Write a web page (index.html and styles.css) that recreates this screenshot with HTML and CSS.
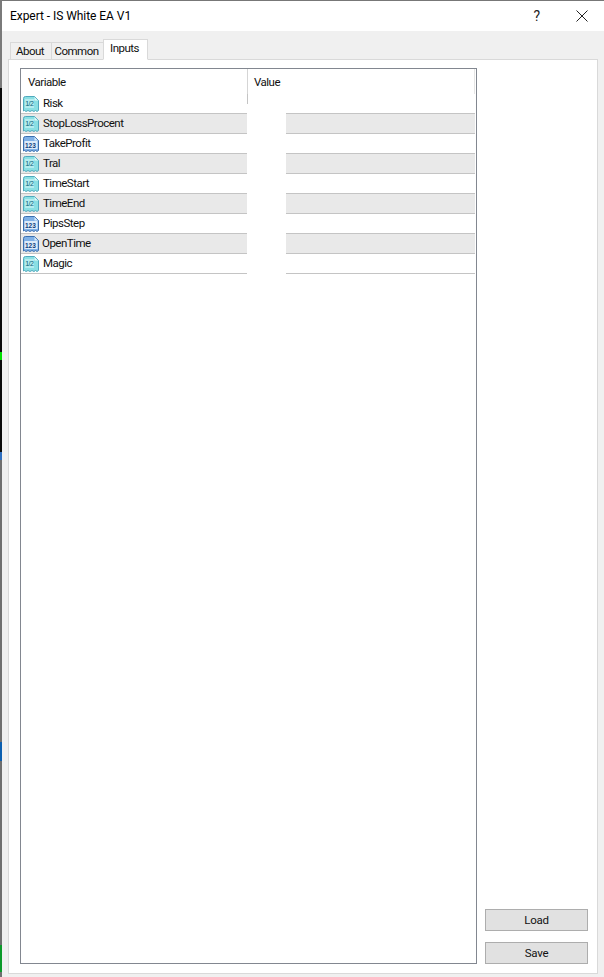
FILE: index.html
```html
<!DOCTYPE html>
<html lang="en">
<head>
<meta charset="utf-8">
<title>Expert - IS White EA V1</title>
<link rel="stylesheet" href="styles.css">
</head>
<body>
<svg class="defs" width="0" height="0" aria-hidden="true">
  <symbol id="tag-frac" viewBox="0 0 16 16">
    <path d="M.5 2.5q0-2 2-2h9l4 4v10l-1.500 1-1.500-1-1.500 1-2-1-2 1-2-1-2 1-1.500-1-1 .5z" fill="#8adfe3" stroke="#4fa9bd"/>
    <path d="M11.500 1v3.500h3.500z" fill="#dff7f8"/>
    <rect x="2" y="3" width="9" height="9" fill="#b4ecef"/>
  </symbol>
  <symbol id="tag-num" viewBox="0 0 16 16">
    <path d="M.5 2.500q0-2 2-2h9l4 4v10l-1.500 1-1.500-1-1.500 1-2-1-2 1-2-1-2 1-1.500-1-1 .5z" fill="#7fb0e6" stroke="#3a6fb0"/>
    <path d="M11.500 1v3.500h3.500z" fill="#d8e8f8"/>
    <rect x="1.500" y="5" width="13" height="8" fill="#dcebf9"/>
  </symbol>
</svg>
<div class="screen">
  <div class="strip"></div>
  <div class="window">
    <header class="titlebar">
      <span class="title">Expert - IS White EA V1</span>
      <div class="controls">
        <span class="help">?</span>
        <svg class="close" width="12" height="12" viewBox="0 0 12 12"><path d="M.5.5l11 11M11.500.5l-11 11" stroke="#222" stroke-width="1" fill="none"/></svg>
      </div>
    </header>
    <main class="body">
      <nav class="tabs">
        <span class="tab tab-about">About</span>
        <span class="tab tab-common">Common</span>
        <span class="tab tab-active">Inputs</span>
      </nav>
      <section class="panel">
        <div class="list">
          <div class="head">
            <span class="head-var">Variable</span>
            <span class="head-val">Value</span>
          </div>
          <div class="row"><div class="var"><svg class="icon" viewBox="0 0 16 16"><use href="#tag-frac"/><text x="2.200" y="10" class="icon-text frac">1/2</text></svg><span>Risk</span></div><div class="mask"></div><div class="val"></div></div>
          <div class="row alt"><div class="var"><svg class="icon" viewBox="0 0 16 16"><use href="#tag-frac"/><text x="2.200" y="10" class="icon-text frac">1/2</text></svg><span>StopLossProcent</span></div><div class="mask"></div><div class="val"></div></div>
          <div class="row"><div class="var"><svg class="icon" viewBox="0 0 16 16"><use href="#tag-num"/><text x="2" y="11.700" class="icon-text num">123</text></svg><span>TakeProfit</span></div><div class="mask"></div><div class="val"></div></div>
          <div class="row alt"><div class="var"><svg class="icon" viewBox="0 0 16 16"><use href="#tag-frac"/><text x="2.200" y="10" class="icon-text frac">1/2</text></svg><span>Tral</span></div><div class="mask"></div><div class="val"></div></div>
          <div class="row"><div class="var"><svg class="icon" viewBox="0 0 16 16"><use href="#tag-frac"/><text x="2.200" y="10" class="icon-text frac">1/2</text></svg><span>TimeStart</span></div><div class="mask"></div><div class="val"></div></div>
          <div class="row alt"><div class="var"><svg class="icon" viewBox="0 0 16 16"><use href="#tag-frac"/><text x="2.200" y="10" class="icon-text frac">1/2</text></svg><span>TimeEnd</span></div><div class="mask"></div><div class="val"></div></div>
          <div class="row"><div class="var"><svg class="icon" viewBox="0 0 16 16"><use href="#tag-num"/><text x="2" y="11.700" class="icon-text num">123</text></svg><span>PipsStep</span></div><div class="mask"></div><div class="val"></div></div>
          <div class="row alt"><div class="var"><svg class="icon" viewBox="0 0 16 16"><use href="#tag-num"/><text x="2" y="11.700" class="icon-text num">123</text></svg><span class="tight">OpenTime</span></div><div class="mask"></div><div class="val"></div></div>
          <div class="row"><div class="var"><svg class="icon" viewBox="0 0 16 16"><use href="#tag-frac"/><text x="2.200" y="10" class="icon-text frac">1/2</text></svg><span>Magic</span></div><div class="mask"></div><div class="val"></div></div>
        </div>
        <aside class="side">
          <button class="btn" type="button">Load</button>
          <button class="btn" type="button">Save</button>
        </aside>
      </section>
    </main>
  </div>
</div>
</body>
</html>
```

FILE: styles.css
```css
* { box-sizing: border-box; }

html, body {
  margin: 0;
  height: 100%;
  overflow: hidden;
}

body {
  font-family: Roboto, "Noto Sans", sans-serif;
  font-size: 11.500px;
  letter-spacing: -0.5px;
  color: #111;
  background: #f0f0f0;
}

.defs { display: block; height: 0; }

.screen {
  display: flex;
  height: 977px;
}

.strip {
  width: 2px;
  flex: none;
  background: linear-gradient(to bottom,
    #7a7a7a 0 88px,
    #0a0a0a 88px 352px,
    #00e000 352px 360px,
    #0a0a0a 360px 452px,
    #2f6fc0 452px 460px,
    #6f6f6f 460px 742px,
    #0b5fb0 742px 761px,
    #6f6f6f 761px 945px,
    #0c9a2a 945px 972px,
    #6f6f6f 972px 977px);
}

.window {
  flex: 1;
  display: flex;
  flex-direction: column;
  min-width: 0;
  background: #f0f0f0;
  border-top: 1px solid #777;
}

.titlebar {
  height: 30px;
  flex: none;
  background: #fff;
  display: flex;
  align-items: center;
  justify-content: space-between;
  padding: 0 16px 0 8px;
}

.title {
  font-size: 12px;
  letter-spacing: -0.05px;
  color: #000;
}

.controls {
  display: flex;
  align-items: center;
  gap: 36px;
}

.help {
  font-size: 14px;
  letter-spacing: 0;
  color: #222;
}

.close { display: block; }

.body {
  flex: 1;
  display: flex;
  flex-direction: column;
  padding: 0 6px 3px;
  min-height: 0;
}

.tabs {
  height: 29px;
  flex: none;
  display: flex;
  align-items: flex-end;
  padding-left: 2px;
  position: relative;
  z-index: 1;
  margin-bottom: -1px;
}

.tab {
  display: flex;
  align-items: center;
  justify-content: center;
  height: 18px;
  background: #f0f0f0;
  border: 1px solid #d9d9d9;
  margin-right: -1px;
  padding: 0 2px 1px 0;
}

.tab-about { width: 42px; }
.tab-common { width: 53px; }

.tab-active {
  width: 45px;
  height: 21px;
  background: #fff;
  border-bottom-color: #fff;
  padding: 0 2px 3px 0;
}

.panel {
  flex: 1;
  display: flex;
  gap: 8px;
  background: #fff;
  border: 1px solid #d9d9d9;
  padding: 8px 9px 9px 11px;
  min-height: 0;
}

.list {
  width: 457px;
  flex: none;
  border: 1px solid #828790;
  background: #fff;
  display: flex;
  flex-direction: column;
  padding-right: 1px;
}

.head {
  height: 25px;
  display: flex;
  flex: none;
  align-items: center;
}

.head-var,
.head-val {
  height: 100%;
  display: flex;
  align-items: center;
}

.head-var {
  width: 227px;
  padding-left: 7px;
  border-right: 1px solid #d5d5d5;
}

.head-val {
  width: 227px;
  padding-left: 6px;
  border-right: 1px solid #e5e5e5;
}

.row {
  height: 20px;
  flex: none;
  display: flex;
  border-bottom: 1px solid #c4c4c4;
}

.row.alt { background: #e9e9e9; }

.var {
  width: 226px;
  flex: none;
  display: flex;
  align-items: center;
  padding-left: 2px;
  gap: 4px;
}

.var span { position: relative; top: -1px; }

.var .tight { margin-left: -1px; }

.mask {
  width: 39px;
  flex: none;
  background: #fff;
  margin-bottom: -1px;
  position: relative;
}

.head + .row .mask {
  background: linear-gradient(#c4c4c4, #c4c4c4) no-repeat left top / 1px 10px, #fff;
}

.val { flex: 1; }

.icon {
  width: 16px;
  height: 16px;
  flex: none;
  display: block;
}

.icon-text {
  font-family: "Liberation Sans", sans-serif;
  letter-spacing: 0;
}

.icon-text.frac { font-size: 7px; fill: #0a5f78; letter-spacing: -0.5px; }
.icon-text.num { font-size: 6.500px; font-weight: 700; fill: #123f80; }

.side {
  flex: 1;
  display: flex;
  flex-direction: column;
  justify-content: flex-end;
  gap: 11px;
}

.btn {
  height: 22px;
  width: 103px;
  padding: 0 0 1px;
  background: #e1e1e1;
  border: 1px solid #adadad;
  border-radius: 0;
  font-family: inherit;
  font-size: 11.500px;
  letter-spacing: -0.3px;
  color: #111;
}
```
